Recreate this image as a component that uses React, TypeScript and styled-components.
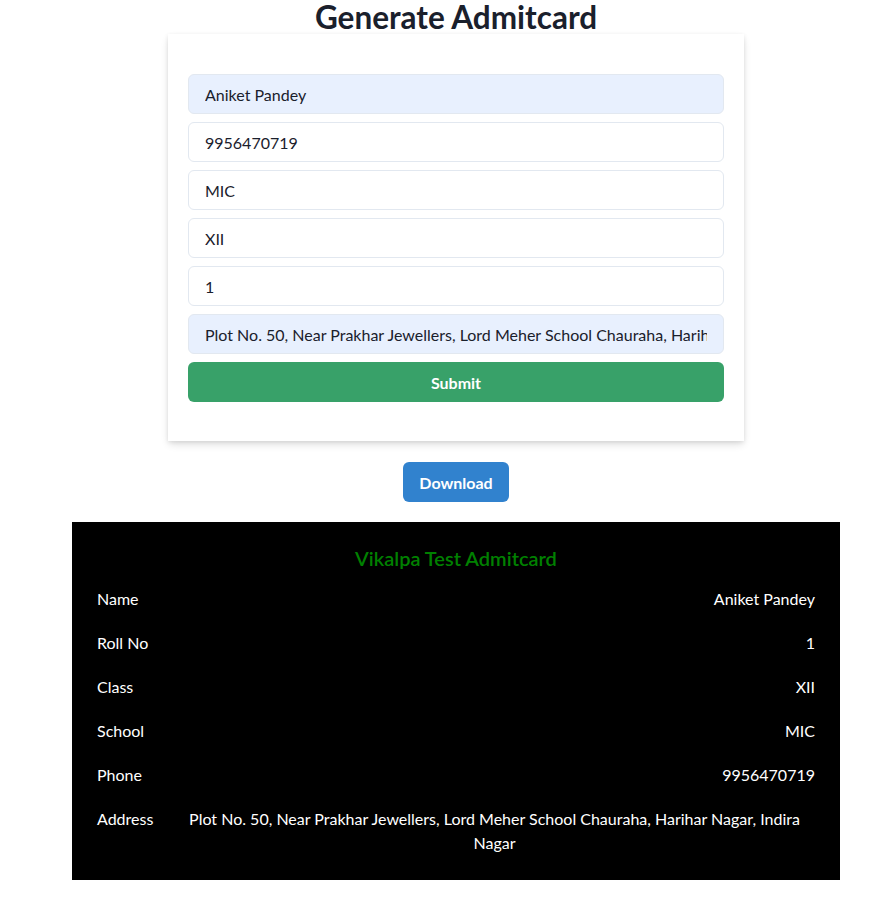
import React from "react";
import styled, { createGlobalStyle } from "styled-components";

const Global = createGlobalStyle`
  * { box-sizing: border-box; }
  body {
    margin: 0;
    background: #ffffff;
    font-family: Lato, "Open Sans", sans-serif;
    color: #1a202c;
  }
`;

const Page = styled.div`
  display: flex;
  flex-direction: column;
  align-items: center;
  padding-left: 25px;
`;

const Title = styled.h2`
  margin: 0;
  font-size: 31.5px;
  line-height: 34px;
  font-weight: 700;
  color: #1a202c;
`;

const Card = styled.div`
  width: 576px;
  background: #fff;
  padding: 40px 20px 39px;
  box-shadow: 0 4px 8px -1px rgba(0, 0, 0, 0.14), 0 1px 4px 0 rgba(0, 0, 0, 0.08);
`;

const Form = styled.form`
  display: flex;
  flex-direction: column;
  gap: 8px;
`;

const Input = styled.input<{ $filled?: boolean }>`
  height: 40px;
  width: 100%;
  padding: 0 16px;
  border: 1px solid #e2e8f0;
  border-radius: 6px;
  background: ${(p) => (p.$filled ? "#e8f0fe" : "#fff")};
  font-family: inherit;
  font-size: 16px;
  color: #1a202c;
  outline: none;
`;

const Button = styled.button<{ $color: string }>`
  height: 40px;
  border: none;
  border-radius: 6px;
  background: ${(p) => p.$color};
  color: #fff;
  font-family: inherit;
  font-size: 16px;
  font-weight: 700;
  padding: 0 16px;
  cursor: pointer;
`;

const DownloadButton = styled(Button)`
  margin-top: 21px;
  width: 106px;
`;

const Panel = styled.div`
  margin-top: 20px;
  width: 768px;
  background: #000;
  color: #fff;
  padding: 20px 25px 15px;
`;

const PanelTitle = styled.div`
  text-align: center;
  color: #008000;
  font-size: 20px;
  line-height: 32px;
  font-weight: 600;
  margin-bottom: 3px;
`;

const Row = styled.div`
  display: grid;
  grid-template-columns: 77px 1fr;
  padding: 10px 0;
  font-size: 16px;
  line-height: 24px;
`;

const Label = styled.div``;

const Value = styled.div<{ $center?: boolean }>`
  text-align: ${(p) => (p.$center ? "center" : "right")};
`;

const name = "Aniket Pandey";
const phone = "9956470719";
const school = "MIC";
const cls = "XII";
const roll = "1";
const address =
  "Plot No. 50, Near Prakhar Jewellers, Lord Meher School Chauraha, Harihar Nagar, Indira Nagar";

export default function App() {
  const rows: [string, string, boolean?][] = [
    ["Name", name],
    ["Roll No", roll],
    ["Class", cls],
    ["School", school],
    ["Phone", phone],
    ["Address", address, true],
  ];
  return (
    <>
      <Global />
      <Page>
        <Title>Generate Admitcard</Title>
        <Card>
          <Form onSubmit={(e) => e.preventDefault()}>
            <Input $filled defaultValue={name} />
            <Input defaultValue={phone} />
            <Input defaultValue={school} />
            <Input defaultValue={cls} />
            <Input defaultValue={roll} />
            <Input $filled defaultValue={address} />
            <Button type="submit" $color="#38a169">Submit</Button>
          </Form>
        </Card>
        <DownloadButton $color="#3182ce">Download</DownloadButton>
        <Panel>
          <PanelTitle>Vikalpa Test Admitcard</PanelTitle>
          {rows.map(([l, v, c]) => (
            <Row key={l}>
              <Label>{l}</Label>
              <Value $center={c}>{v}</Value>
            </Row>
          ))}
        </Panel>
      </Page>
    </>
  );
}
